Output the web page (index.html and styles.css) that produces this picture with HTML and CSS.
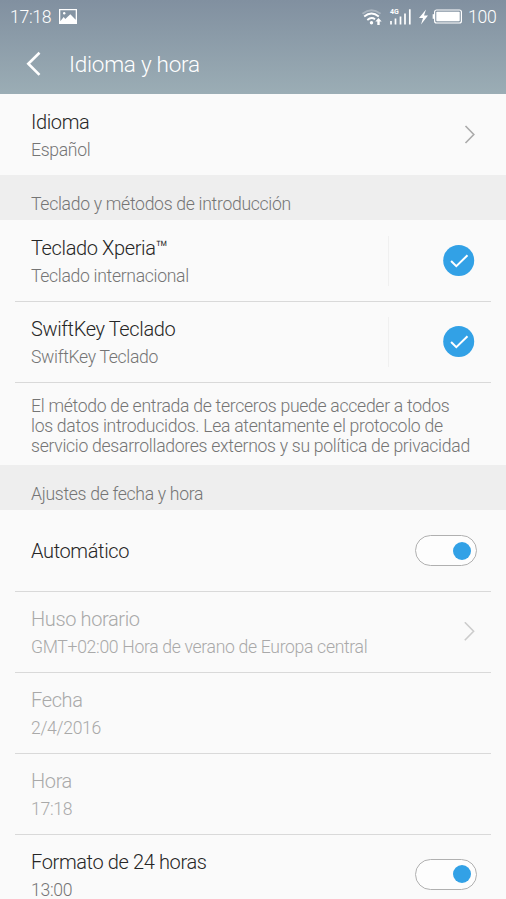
FILE: index.html
```html
<!DOCTYPE html>
<html lang="es">
<head>
<meta charset="utf-8">
<title>Idioma y hora</title>
<link rel="stylesheet" href="styles.css">
</head>
<body>
<header class="header">
  <div class="status">
    <span class="clock">17:18</span>
    <svg class="picture" width="18" height="15" viewBox="0 0 18 15"><path fill="#fff" fill-rule="evenodd" d="M0 0h18v15H0zM1.300 1.300v11l3.400-4.300 1.600 1.900 5-4.700 5.400 5.600V1.300z"/><circle cx="5.200" cy="4.300" r="1.200" fill="#fff"/></svg>
    <svg class="signals" width="102" height="20" viewBox="0 0 102 20">
      <g fill="none" stroke="#fff" stroke-width="1.900">
        <path d="M1.500 6.800Q10.500-.2 19.500 6.800" opacity=".3"/>
        <path d="M3.200 9.600Q10.500 3.500 17.800 9.600"/>
        <path d="M6.300 12.900Q10.500 9.600 14 12.300"/>
      </g>
      <circle cx="10.500" cy="15.800" r="1.700" fill="#fff"/>
      <path d="M17.500 11l3.200 3.500h-2v3.500h-2.400v-3.500h-2z" fill="#fff"/>
      <text class="network" x="29" y="6.500">4G</text>
      <path d="M30 14V17.500M34.500 11.500V17.500M39.500 9.500V17.500M44 6.500V17.500M48.800 2.300V17.500" stroke="#fff" stroke-width="1.700"/>
      <path d="M65 2.500l-7 8.500h4l-2 6.500 7-9h-4z" fill="#fff"/>
      <rect x="73.600" y="3" width="26.800" height="13" rx="2" fill="none" stroke="#fff" stroke-width="1.200"/>
      <rect x="75.300" y="4.700" width="23.400" height="9.600" rx=".8" fill="#fff"/>
      <path d="M72.400 7.200v4.600" stroke="#fff" stroke-width="1.500"/>
    </svg>
    <span class="level">100</span>
  </div>
  <div class="bar">
    <svg class="back" width="16" height="26" viewBox="0 0 16 26"><path d="M13.500 1.700L2.300 12.700 13.500 23.800" fill="none" stroke="#fff" stroke-width="2.600"/></svg>
    <h1 class="heading">Idioma y hora</h1>
  </div>
</header>
<main>
  <div class="row lead">
    <div class="texts"><div class="title">Idioma</div><div class="sub">Español</div></div>
    <svg class="chevron" width="12" height="20" viewBox="0 0 12 20"><path d="M1.500 1L9.800 9.500l-8.300 8.500" fill="none" stroke="#aaa" stroke-width="1.600"/></svg>
  </div>
  <h2 class="section">Teclado y métodos de introducción</h2>
  <div class="row lead">
    <div class="texts"><div class="title">Teclado Xperia™</div><div class="sub">Teclado internacional</div></div>
    <span class="split"></span>
    <svg class="check" width="32" height="32" viewBox="0 0 32 32"><circle cx="15.700" cy="15.500" r="15.500" fill="#32a1e6"/><path d="M8.100 16l5.200 5.200L24.500 10.200" fill="none" stroke="#fff" stroke-width="2"/></svg>
  </div>
  <div class="row ruled">
    <div class="texts"><div class="title">SwiftKey Teclado</div><div class="sub">SwiftKey Teclado</div></div>
    <span class="split"></span>
    <svg class="check" width="32" height="32" viewBox="0 0 32 32"><circle cx="15.700" cy="15.500" r="15.500" fill="#32a1e6"/><path d="M8.100 16l5.200 5.200L24.500 10.200" fill="none" stroke="#fff" stroke-width="2"/></svg>
  </div>
  <p class="note ruled">El método de entrada de terceros puede acceder a todos<br>los datos introducidos. Lea atentamente el protocolo de<br>servicio desarrolladores externos y su política de privacidad</p>
  <h2 class="section">Ajustes de fecha y hora</h2>
  <div class="row">
    <div class="texts"><div class="title">Automático</div></div>
    <span class="switch"><span class="knob"></span></span>
  </div>
  <div class="row ruled disabled">
    <div class="texts"><div class="title">Huso horario</div><div class="sub">GMT+02:00 Hora de verano de Europa central</div></div>
    <svg class="chevron" width="12" height="20" viewBox="0 0 12 20"><path d="M.8 .3L9.600 9.200l-8.800 9" fill="none" stroke="#ccc" stroke-width="1.600"/></svg>
  </div>
  <div class="row ruled disabled">
    <div class="texts"><div class="title">Fecha</div><div class="sub">2/4/2016</div></div>
  </div>
  <div class="row ruled disabled">
    <div class="texts"><div class="title">Hora</div><div class="sub">17:18</div></div>
  </div>
  <div class="row ruled last">
    <div class="texts"><div class="title">Formato de 24 horas</div><div class="sub">13:00</div></div>
    <span class="switch"><span class="knob"></span></span>
  </div>
</main>
</body>
</html>
```
FILE: styles.css
```css
* { box-sizing: border-box; }
html, body { height: 899px; overflow: hidden; }
body {
  margin: 0;
  background: #fafafa;
  font-family: Roboto, "Liberation Sans", sans-serif;
  font-weight: 300;
}
h1, h2, p { margin: 0; font-weight: 300; }
svg { display: block; flex: none; }

.header {
  height: 94px;
  color: #fff;
  background: linear-gradient(#8190a0, #9badb5);
}
.status {
  display: flex;
  align-items: center;
  height: 33px;
  padding: 0 10px;
  font-size: 17.6px;
  letter-spacing: -0.3px;
}
.clock { width: 49px; }
.signals { margin-left: auto; }
.network { font-size: 7px; font-weight: 700; letter-spacing: 0; fill: #fff; }
.level { margin-left: 5px; width: 28px; white-space: nowrap; }
.bar {
  display: flex;
  align-items: center;
  height: 61px;
  padding-left: 26px;
}
.heading { margin-left: 27px; font-size: 22.5px; line-height: 26px; letter-spacing: -0.25px; }

.row {
  display: flex;
  align-items: center;
  height: 81px;
  margin: 0 15px;
  padding: 0 14px 0 16px;
}
.ruled { border-top: 1px solid #d9d9d9; }
.last { padding-bottom: 2px; }
.texts { flex: 1; padding-top: 2px; }
.lead .texts { padding-top: 4px; }
.last .texts { padding-top: 5px; }
.title { color: #262626; font-size: 20px; line-height: 27px; letter-spacing: -0.37px; white-space: nowrap; }
.sub { color: #757575; font-size: 17.6px; line-height: 28px; letter-spacing: -0.32px; white-space: nowrap; }
.disabled .title, .disabled .sub { color: #a9a9a9; }
.chevron { margin-right: 1px; }

.section {
  height: 45px;
  padding: 13px 31px 0;
  background: #eee;
  color: #757575;
  font-size: 17.6px;
  line-height: 32px;
  letter-spacing: -0.3px;
}
.split { width: 1px; height: 50px; margin-right: 54px; background: #f0f0f0; }
.check { margin-right: 2px; }

.note {
  height: 83px;
  margin: 0 15px;
  padding: 13px 0 0 16px;
  color: #757575;
  font-size: 17.6px;
  line-height: 20px;
  letter-spacing: -0.29px;
  white-space: nowrap;
}

.switch {
  display: flex;
  align-items: center;
  justify-content: flex-end;
  width: 62px;
  height: 31px;
  padding-right: 5px;
  border: 1px solid #b0b0b0;
  border-radius: 16px;
  background: #fdfdfd;
}
.knob { width: 18px; height: 18px; border-radius: 50%; background: #32a1e6; }
```
